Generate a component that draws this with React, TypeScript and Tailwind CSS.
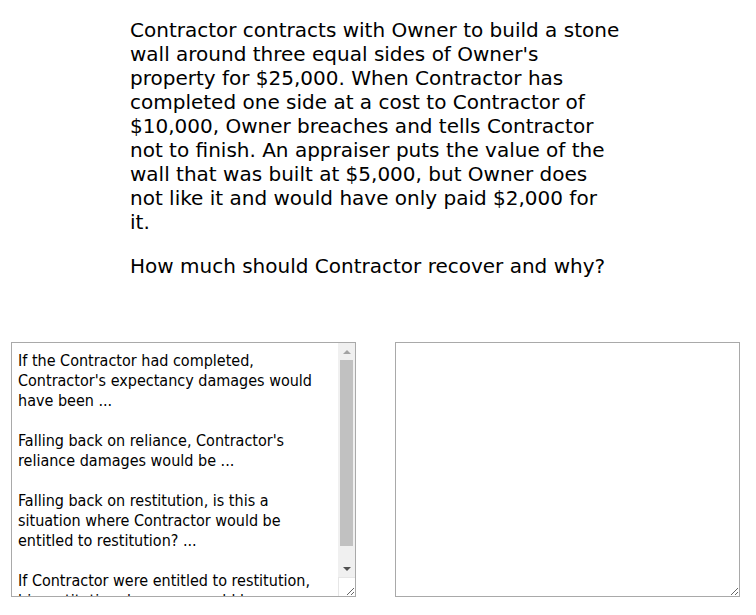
const notes = `If the Contractor had completed, Contractor's expectancy damages would have been ...

Falling back on reliance, Contractor's reliance damages would be ...

Falling back on restitution, is this a situation where Contractor would be entitled to restitution? ...

If Contractor were entitled to restitution, his restitution damages would be ...`;

// classic windows-style scrollbar drawn over the textarea (native one is hidden)
function FakeScrollbar() {
  return (
    <div className="pointer-events-none absolute right-[1px] top-[1px] bottom-[1px] flex w-[17px] flex-col">
      <div className="flex h-[234px] flex-col bg-[#f0f0f0]">
        <div className="flex h-[17px] items-center justify-center">
          <div className="h-0 w-0 border-x-[4px] border-b-[4px] border-x-transparent border-b-[#a3a3a3]" />
        </div>
        <div className="mx-[2px] h-[186px] bg-[#c1c1c1]" />
        <div className="flex-1" />
        <div className="flex h-[17px] items-center justify-center">
          <div className="h-0 w-0 border-x-[4px] border-t-[4px] border-x-transparent border-t-[#505050]" />
        </div>
      </div>
      <div className="flex-1 border-l border-t border-[#e6e6e6]" />
    </div>
  );
}

const boxCls =
  "block h-[255px] w-[345px] resize border border-[#a9a9a9] bg-white pl-[6px] pt-[8px] pb-[6px] font-['DejaVu_Sans_Condensed',Tahoma,sans-serif] text-[16px] leading-[20px] text-black outline-none";

export default function App() {
  return (
    <div className="min-h-[615px] bg-white text-black">
      {/* Question */}
      <div className="ml-[130px] w-[490px] pt-[18px] font-['DejaVu_Sans',Verdana,sans-serif] text-[20px] leading-[24px]">
        <p>
          Contractor contracts with Owner to build a stone wall around three equal sides of Owner's
          property for $25,000. When Contractor has completed one side at a cost to Contractor of
          $10,000, Owner breaches and tells Contractor not to finish. An appraiser puts the value of
          the wall that was built at $5,000, but Owner does not like it and would have only paid
          $2,000 for it.
        </p>
        <p className="mt-[20px]">How much should Contractor recover and why?</p>
      </div>

      {/* Answer boxes */}
      <div className="mt-[64px] flex gap-[39px] pl-[11px]">
        <div className="relative">
          <textarea
            defaultValue={notes}
            className={`${boxCls} overflow-y-scroll pr-[23px] [scrollbar-width:none]`}
          />
          <FakeScrollbar />
        </div>
        <textarea className={`${boxCls} pr-[6px]`} />
      </div>
    </div>
  );
}
